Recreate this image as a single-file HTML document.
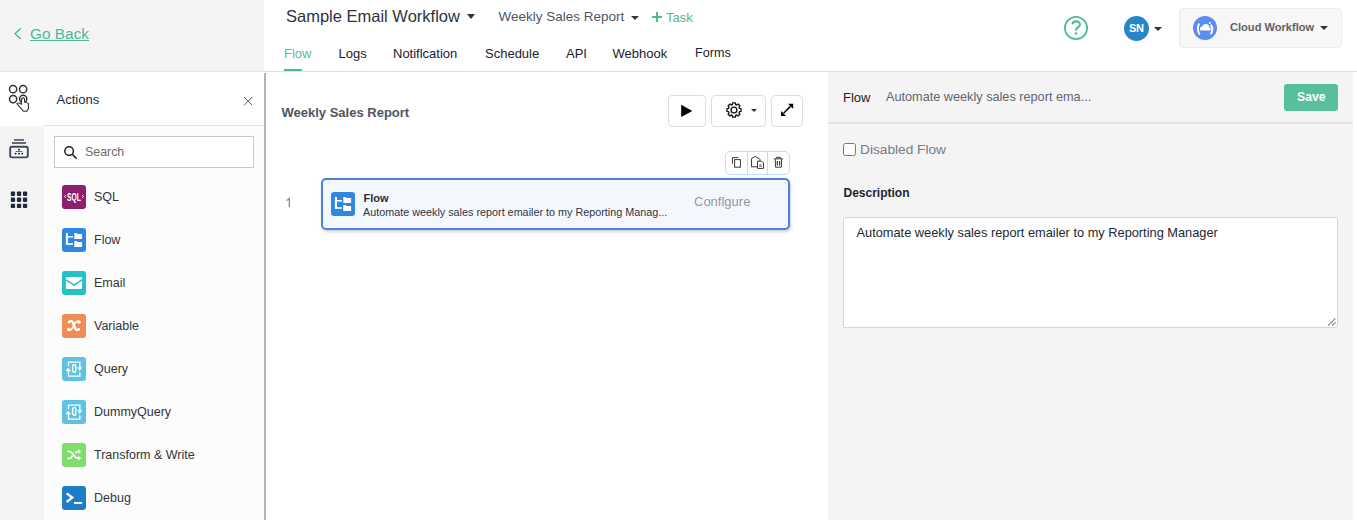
<!DOCTYPE html>
<html><head><meta charset="utf-8">
<style>
*{box-sizing:border-box;margin:0;padding:0}
html,body{width:1357px;height:520px;overflow:hidden;background:#fff;font-family:"Liberation Sans",sans-serif;color:#333}
.a{position:absolute;white-space:nowrap}
svg{position:absolute;overflow:visible}
#hdrL{left:0;top:0;width:264px;height:73px;background:#f4f4f4;border-bottom:2px solid #e3e6e9}
#hdrline{left:264px;top:71px;width:1093px;height:1px;background:#dde1e5}
.tab{font-size:13px;color:#1c2130;top:46px}
.caret{width:0;height:0;border-left:4px solid transparent;border-right:4px solid transparent;border-top:5px solid #2b3340}
#iconcol{left:0;top:72px;width:44px;height:448px;background:#f4f4f4}
#iconact{left:0;top:72px;width:44px;height:54px;background:#fff}
#actpanel{left:44px;top:72px;width:220px;height:448px;background:#fcfcfc}
#acthdr{left:44px;top:72px;width:220px;height:54px;background:#fff;border-bottom:1px solid #e3e3e3}
#vline{left:264px;top:73px;width:2px;height:447px;background:#b5b5b5}
.item{left:94px;font-size:12.5px;color:#30353d}
.ico{left:62px;width:24px;height:24px;border-radius:3px}
#rpanel{left:828px;top:72px;width:525px;height:448px;background:#f4f4f4}
.btn{border:1.5px solid #dedede;border-radius:4px;background:#fff}
</style></head><body>
<!-- header -->
<div class="a" id="hdrL"></div>
<div class="a" id="hdrline"></div>
<svg style="left:0;top:0" width="30" height="60"><path d="M20.8 28.3 L15 33.7 L20.8 39" fill="none" stroke="#4fb897" stroke-width="1.4"/></svg>
<div class="a" style="left:30px;top:25px;font-size:15.4px;color:#4fb897">Go Back</div>
<div class="a" style="left:30px;top:40px;width:59px;height:1px;background:#4fb897"></div>

<div class="a" style="left:286px;top:7px;font-size:16.5px;color:#2b3340">Sample Email Workflow</div>
<div class="a caret" style="left:467px;top:14px"></div>
<div class="a" style="left:498.5px;top:9px;font-size:13.5px;color:#50565f">Weekly Sales Report</div>
<div class="a caret" style="left:631px;top:15.5px;border-top-width:4.5px"></div>
<div class="a" style="left:652px;top:16px;width:10px;height:2.4px;background:#4fb897"></div>
<div class="a" style="left:655.8px;top:12.2px;width:2.4px;height:10px;background:#4fb897"></div>
<div class="a" style="left:666px;top:10px;font-size:13px;color:#4fb897">Task</div>

<div class="a tab" style="left:284px;color:#55bb9c">Flow</div>
<div class="a" style="left:284px;top:69px;width:18px;height:2px;background:#4fb897"></div>
<div class="a tab" style="left:338.5px">Logs</div>
<div class="a tab" style="left:393px">Notiflcation</div>
<div class="a tab" style="left:485px">Schedule</div>
<div class="a tab" style="left:566px">API</div>
<div class="a tab" style="left:612.5px">Webhook</div>
<div class="a tab" style="left:695px;font-size:12.6px;top:46.3px">Forms</div>

<!-- right header -->
<svg style="left:0;top:0" width="1" height="1"><circle cx="1076" cy="28" r="11.1" fill="none" stroke="#4dbb94" stroke-width="1.8"/>
<path d="M1072.3 24.4 C1072.7 22.3 1074.2 21.4 1076 21.4 C1078.3 21.4 1080 22.9 1080 24.8 C1080 27 1076.1 27.4 1076.1 29.8 L1076.1 30.8" fill="none" stroke="#4dbb94" stroke-width="2.1"/>
<circle cx="1076" cy="33.5" r="1.3" fill="#4dbb94"/></svg>
<div class="a" style="left:1124px;top:16px;width:25px;height:25px;background:#2786c9;border-radius:50%"></div>
<div class="a" style="left:1129px;top:21.5px;font-size:11px;font-weight:bold;color:#fff;letter-spacing:-0.3px">SN</div>
<div class="a caret" style="left:1154px;top:27px;border-top-width:4px"></div>
<div class="a" style="left:1179px;top:8px;width:163px;height:40px;background:#f7f7f7;border:1px solid #ebebeb;border-radius:4px"></div>
<div class="a" style="left:1193px;top:16px;width:24px;height:24px;background:#5a8def;border-radius:50%"></div>
<svg style="left:1193px;top:16px" width="24" height="24">
<path d="M7.6 14.6 L16.6 14.6 C18.2 14.6 18.2 11.6 16.4 11.4 C16.3 9.3 14.8 8.1 12.6 8.1 C10.8 8.1 9.7 9.2 9.4 10.5 C7.6 10.4 6.9 11.8 7 12.8 C7 13.8 7.3 14.6 7.6 14.6Z" fill="#fff"/>
<path d="M6.2 7.4 C4.3 10.5 4.3 15.6 6.8 18.6" fill="none" stroke="#fff" stroke-width="1.9"/>
<path d="M17.8 8.6 C20 11.6 19.8 15.8 17.4 18.2" fill="none" stroke="#fff" stroke-width="1.9"/>
<circle cx="16.9" cy="7" r="1.1" fill="#fff"/></svg>
<div class="a" style="left:1230px;top:21px;font-size:11.1px;font-weight:bold;color:#626262">Cloud Workflow</div>
<div class="a caret" style="left:1320px;top:25.7px;border-top-width:4.3px"></div>

<!-- left -->
<div class="a" id="iconcol"></div>
<div class="a" id="iconact"></div>
<div class="a" id="actpanel"></div>
<div class="a" id="acthdr"></div>
<svg style="left:0;top:0" width="1" height="1">
<g fill="none" stroke="#333" stroke-width="1.5">
<circle cx="13.1" cy="89.2" r="3.6"/><circle cx="23.1" cy="89.2" r="3.6"/>
<circle cx="13.1" cy="99.1" r="3.6"/><circle cx="23.2" cy="98.8" r="3.6"/>
</g>
<path d="M21.6 103.5 L21.6 98.8 Q23.1 96.9 24.6 98.8 L24.6 102.3 Q26.7 102 28.4 103.6 L28.4 108.5 L26.9 111.3 L23.6 111.3 L16.9 103.6 Q18.8 102.2 21.6 104.4Z" fill="#fff" stroke="#333" stroke-width="1.1" stroke-linejoin="round"/>
<g fill="#3e4a58">
<rect x="14" y="139.2" width="10" height="1.5"/>
<rect x="12" y="142.2" width="14" height="1.6"/>
</g>
<rect x="10.2" y="146.8" width="17.6" height="10.6" rx="1.8" fill="none" stroke="#3e4a58" stroke-width="1.9"/>
<g fill="#111">
<circle cx="19" cy="149.7" r="0.9"/>
<rect x="15.6" y="151.3" width="6.8" height="0.6"/>
<circle cx="15.6" cy="153.6" r="0.95"/><circle cx="19" cy="153.6" r="0.95"/><circle cx="22.2" cy="153.6" r="0.95"/>
</g>
<g fill="#1f2b3a">
<rect x="10.8" y="191.6" width="4.3" height="4.3" rx="0.8"/><rect x="16.9" y="191.6" width="4.3" height="4.3" rx="0.8"/><rect x="22.9" y="191.6" width="4.3" height="4.3" rx="0.8"/>
<rect x="10.8" y="197.6" width="4.3" height="4.3" rx="0.8"/><rect x="16.9" y="197.6" width="4.3" height="4.3" rx="0.8"/><rect x="22.9" y="197.6" width="4.3" height="4.3" rx="0.8"/>
<rect x="10.8" y="203.7" width="4.3" height="4.3" rx="0.8"/><rect x="16.9" y="203.7" width="4.3" height="4.3" rx="0.8"/><rect x="22.9" y="203.7" width="4.3" height="4.3" rx="0.8"/>
</g>
</svg>
<div class="a" style="left:56.5px;top:92px;font-size:13px;color:#1f2a3a">Actions</div>
<svg style="left:0;top:0" width="1" height="1"><path d="M244 97 L252.3 105.3 M252.3 97 L244 105.3" stroke="#555" stroke-width="1"/></svg>
<div class="a" id="vline"></div>
<div class="a" style="left:54px;top:136px;width:200px;height:31.5px;background:#fff;border:1px solid #c9c9c9"></div>
<svg style="left:0;top:0" width="1" height="1"><circle cx="69.1" cy="151.1" r="4.3" fill="none" stroke="#222" stroke-width="1.5"/><path d="M72.3 154.3 L76.6 158.6" stroke="#222" stroke-width="1.6"/></svg>
<div class="a" style="left:85px;top:145px;font-size:12.4px;color:#6b6b6b">Search</div>

<div class="a ico" style="top:185px;background:#8e1e6f"></div><div class="a item" style="top:189.7px">SQL</div>
<svg style="left:62px;top:185px" width="24" height="24"><g fill="#fff">
<text x="5" y="15.8" font-family="Liberation Sans" font-weight="bold" font-size="11.8" textLength="13.8" lengthAdjust="spacingAndGlyphs">SQL</text></g>
<path d="M3.9 10.2 L2.4 11.5 L3.9 12.8 M20.1 10.2 L21.6 11.5 L20.1 12.8" fill="none" stroke="#fff" stroke-width="0.9"/></svg>
<div class="a ico" style="top:228px;background:#2f87e0"></div><div class="a item" style="top:232.7px">Flow</div>
<svg style="left:62px;top:228px" width="24" height="24" class="flowico"><g fill="#fff">
<rect x="3.9" y="5" width="2.1" height="11.8"/><rect x="3.9" y="8" width="7" height="1.6"/><rect x="3.9" y="15.2" width="7" height="1.6"/>
<path d="M12.3 5 L14.5 5 L15.5 6 L20.1 6 L20.1 10.9 L12.3 10.9Z"/>
<path d="M12.3 13.1 L14.5 13.1 L15.5 14 L20.1 14 L20.1 19 L12.3 19Z"/></g></svg>
<div class="a ico" style="top:271px;background:#26c1c7"></div><div class="a item" style="top:275.7px">Email</div>
<svg style="left:62px;top:271px" width="24" height="24"><rect x="3.9" y="6.1" width="16.2" height="11.8" rx="1.2" fill="#fff"/><path d="M3.9 8.9 L12 14.2 L20.1 8.9" fill="none" stroke="#26c1c7" stroke-width="1.5"/></svg>
<div class="a ico" style="top:314px;background:#f08c56"></div><div class="a item" style="top:318.7px">Variable</div>
<svg style="left:62px;top:314px" width="24" height="24"><path d="M6.8 8.2 C8.3 6.6 10.2 6.3 11 8.6 L13.2 14.5 C13.8 16.1 15.3 16.3 16.8 15.2" fill="none" stroke="#fff" stroke-width="2.4" stroke-linecap="round"/><path d="M17.6 7.8 C16.6 6.8 14.5 6.8 12.9 9.3 L10.3 14.2 C9.2 16.2 7.6 16.6 6.3 15.8" fill="none" stroke="#fff" stroke-width="1.6" stroke-linecap="round"/><circle cx="17" cy="8.2" r="1.6" fill="#fff"/><circle cx="6.6" cy="15.3" r="1.6" fill="#fff"/></svg>
<div class="a ico" style="top:357px;background:#5fc2e0"></div><div class="a item" style="top:361.7px">Query</div>
<div class="a ico" style="top:400px;background:#5fc2e0"></div><div class="a item" style="top:404.7px">DummyQuery</div>
<svg style="left:62px;top:357px" width="24" height="24"><g fill="none" stroke="#fff" stroke-width="1.4">
<path d="M6.5 9.2 L6.5 5.1 L17.8 5.1 L17.8 10.6"/><path d="M6.5 13.5 L6.5 19.1 L17.8 19.1 L17.8 15.2"/>
<rect x="10.6" y="7.6" width="3.2" height="7.6" rx="1.6"/></g>
<path d="M3.9 13.9 L6.1 11 L8.5 13.9Z M15.8 10.4 L19.8 10.4 L17.7 13.6Z M12.6 14.6 L14.2 15.8" fill="#fff" stroke="#fff" stroke-width="0.6"/></svg>
<svg style="left:62px;top:400px" width="24" height="24"><g fill="none" stroke="#fff" stroke-width="1.4">
<path d="M6.5 9.2 L6.5 5.1 L17.8 5.1 L17.8 10.6"/><path d="M6.5 13.5 L6.5 19.1 L17.8 19.1 L17.8 15.2"/>
<rect x="10.6" y="7.6" width="3.2" height="7.6" rx="1.6"/></g>
<path d="M3.9 13.9 L6.1 11 L8.5 13.9Z M15.8 10.4 L19.8 10.4 L17.7 13.6Z M12.6 14.6 L14.2 15.8" fill="#fff" stroke="#fff" stroke-width="0.6"/></svg>
<div class="a ico" style="top:443px;background:#80dc6c"></div><div class="a item" style="top:447.7px">Transform &amp; Write</div>
<svg style="left:62px;top:443px" width="24" height="24"><g fill="none" stroke="#fff" stroke-width="1.7">
<path d="M5.3 8.5 L7.5 8.5 C11 8.5 12 15.2 15.5 15.2 L17 15.2"/><path d="M5.3 15.5 L7.5 15.5 C9 15.5 9.8 14 10.5 12.8 M13.2 10 C13.8 9 14.6 8.5 15.5 8.5 L17 8.5"/></g>
<path d="M16.3 6 L19.1 8.5 L16.3 11Z M16.3 12.7 L19.1 15.2 L16.3 17.7Z" fill="#fff"/></svg>
<div class="a ico" style="top:486px;background:#1f7dc6"></div><div class="a item" style="top:490.7px">Debug</div>
<svg style="left:62px;top:486px" width="24" height="24"><path d="M4.6 7.3 L10.3 11.6 L4.6 16" fill="none" stroke="#fff" stroke-width="2.3"/><rect x="12" y="16" width="8.1" height="1.9" fill="#fff"/></svg>

<!-- center -->
<div class="a" style="left:281.5px;top:105px;font-size:13px;font-weight:bold;color:#4f555e">Weekly Sales Report</div>
<div class="a btn" style="left:668px;top:95px;width:38px;height:32px"></div>
<svg style="left:0;top:0" width="1" height="1"><path d="M681.2 104.8 L692.3 111 L681.2 117.1Z" fill="#000"/></svg>
<div class="a btn" style="left:711px;top:95px;width:55px;height:32px"></div>
<svg style="left:722px;top:98px" width="24" height="24"><path d="M10.36 6.64 L10.63 4.93 L13.37 4.93 L13.64 6.64 L14.63 7.06 L16.03 6.03 L17.97 7.97 L16.94 9.37 L17.36 10.36 L19.07 10.63 L19.07 13.37 L17.36 13.64 L16.94 14.63 L17.97 16.03 L16.03 17.97 L14.63 16.94 L13.64 17.36 L13.37 19.07 L10.63 19.07 L10.36 17.36 L9.37 16.94 L7.97 17.97 L6.03 16.03 L7.06 14.63 L6.64 13.64 L4.93 13.37 L4.93 10.63 L6.64 10.36 L7.06 9.37 L6.03 7.97 L7.97 6.03 L9.37 7.06Z" fill="none" stroke="#111" stroke-width="1.3" stroke-linejoin="round"/><circle cx="12" cy="12" r="2.9" fill="none" stroke="#111" stroke-width="1.3"/></svg>
<div class="a caret" style="left:751px;top:109px;border-left-width:3px;border-right-width:3px;border-top-width:3px;border-top-color:#333"></div>
<div class="a btn" style="left:771px;top:95px;width:32px;height:32px"></div>
<svg style="left:775px;top:98px" width="24" height="24"><path d="M8.6 15.2 L15.4 8.4" stroke="#000" stroke-width="1.5"/><path d="M18.2 5.8 L18.2 10.9 L13.1 5.8Z M6 18 L6 12.9 L11.1 18Z" fill="#000"/></svg>

<div class="a" style="left:725px;top:151px;width:65px;height:24px;border:1px solid #c7d9fa;border-radius:5px;background:#fff"></div>
<div class="a" style="left:747px;top:151px;width:1px;height:24px;background:#c7d9fa"></div>
<div class="a" style="left:767px;top:151px;width:1px;height:24px;background:#c7d9fa"></div>
<svg style="left:0;top:0" width="1" height="1"><g fill="none" stroke="#3a3a3a" stroke-width="1">
<path d="M732.4 163.8 L732.4 157.6 L738.4 157.6"/><rect x="734.6" y="159.6" width="5.8" height="7.6"/>
<path d="M757.3 166.8 L751.5 166.8 L751.5 158.6 Q751.8 157.8 753 157.8 Q755.3 154.9 757.6 157.8 Q759.2 157.9 759.9 159.4 L759.9 161"/>
<path d="M757.5 161.1 L761.6 161.1 L763.5 163 L763.5 168.4 L757.5 168.4Z"/><path d="M759.2 164.9 L761.8 164.9 M759.2 166.3 L761.8 166.3" stroke-width="0.8"/>
<path d="M774 158.8 L782.8 158.8 M776.6 158.6 L776.6 157.3 L780.3 157.3 L780.3 158.6 M775.2 159 L775.6 167.2 L781.3 167.2 L781.7 159"/>
<path d="M777.3 161 L777.3 165.6 M779.6 161 L779.6 165.6" stroke-width="1.2"/></g></svg>

<svg style="left:0;top:0" width="1" height="1"><path d="M286.6 200.6 L289.3 198.4 L289.3 207" fill="none" stroke="#808080" stroke-width="1.2"/></svg>
<div class="a" style="left:321px;top:178px;width:469px;height:52px;background:#f4f8fe;border:2px solid #4a80de;border-radius:5px;box-shadow:1px 2px 3px rgba(0,0,0,.18)"></div>
<div class="a" style="left:331px;top:192px;width:24px;height:24px;background:#2f87e0;border-radius:3px"></div>
<svg style="left:331px;top:192px" width="24" height="24"><g fill="#fff">
<rect x="3.9" y="5" width="2.1" height="11.8"/><rect x="3.9" y="8" width="7" height="1.6"/><rect x="3.9" y="15.2" width="7" height="1.6"/>
<path d="M12.3 5 L14.5 5 L15.5 6 L20.1 6 L20.1 10.9 L12.3 10.9Z"/>
<path d="M12.3 13.1 L14.5 13.1 L15.5 14 L20.1 14 L20.1 19 L12.3 19Z"/></g></svg>
<div class="a" style="left:363.5px;top:192px;font-size:11px;font-weight:bold;color:#2a2f37">Flow</div>
<div class="a" style="left:363px;top:206px;font-size:10.8px;color:#30353d">Automate weekly sales report emailer to my Reporting Manag...</div>
<div class="a" style="left:694px;top:194px;font-size:13px;color:#919aa2">Conflgure</div>

<!-- right panel -->
<div class="a" id="rpanel"></div>
<div class="a" style="left:828px;top:122px;width:525px;height:2px;background:#e3e3e3"></div>
<div class="a" style="left:843px;top:90px;font-size:13px;color:#222">Flow</div>
<div class="a" style="left:886px;top:90px;font-size:12.7px;color:#5f6670">Automate weekly sales report ema...</div>
<div class="a" style="left:1284px;top:84px;width:54px;height:27px;background:#57bf9c;border-radius:3px"></div>
<div class="a" style="left:1297px;top:89.5px;font-size:12.2px;font-weight:bold;color:#fff">Save</div>
<div class="a" style="left:843px;top:143px;width:13px;height:13px;border:1px solid #767676;border-radius:2.5px;background:#fff"></div>
<div class="a" style="left:860px;top:141.5px;font-size:13.7px;color:#767d85">Disabled Flow</div>
<div class="a" style="left:843.5px;top:186px;font-size:12px;font-weight:bold;color:#1f2530">Description</div>
<div class="a" style="left:843px;top:217px;width:495px;height:111px;background:#fff;border:1px solid #d5d5d5;border-radius:2px"></div>
<div class="a" style="left:856.5px;top:225px;font-size:12.8px;color:#23282f">Automate weekly sales report emailer to my Reporting Manager</div>
<svg style="left:0;top:0" width="1" height="1"><path d="M1328.3 325.5 L1335.5 318.3 M1332.3 325.5 L1335.5 322.3" stroke="#555" stroke-width="1.1" stroke-dasharray="1.2 0.5"/></svg>
</body></html>
